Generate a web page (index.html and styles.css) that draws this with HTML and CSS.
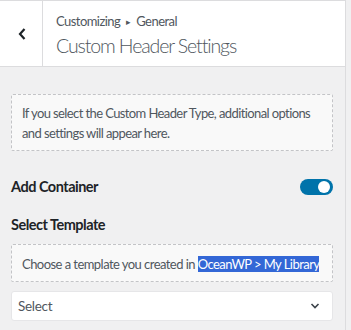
FILE: index.html
```html
<!DOCTYPE html>
<html lang="en">
<head>
    <meta charset="UTF-8">
    <meta name="viewport" content="width=device-width, initial-scale=1.0">
    <title>Custom Header Settings</title>
    <link rel="stylesheet" href="styles.css">
</head>
<body>
    <div class="panel">
        <header class="section-header">
            <button class="back-btn" aria-label="Back">
                <svg width="10" height="14" viewBox="0 0 10 14">
                    <path d="M7.5 2 L3 7 L7.5 12" fill="none" stroke="#1d2327" stroke-width="2.2"/>
                </svg>
            </button>
            <div class="titles">
                <span class="crumb">Customizing <span class="crumb-sep">&#9656;</span> General</span>
                <h2>Custom Header Settings</h2>
            </div>
        </header>

        <div class="controls">
            <div class="notice">
                If you select the Custom Header Type, additional options and settings will appear here.
            </div>

            <div class="control-row">
                <span class="control-title">Add Container</span>
                <span class="toggle"><span class="knob"></span></span>
            </div>

            <div class="control-title select-title">Select Template</div>

            <div class="notice notice-small">
                Choose a template you created in <span class="selected">OceanWP &gt; My Library</span>
            </div>

            <div class="select-box">
                <span>Select</span>
                <svg width="10" height="6" viewBox="0 0 10 6">
                    <path d="M1.5 1 L5 4.5 L8.5 1" fill="none" stroke="#3c434a" stroke-width="1.6"/>
                </svg>
            </div>
        </div>
    </div>
</body>
</html>
```

FILE: styles.css
```css
* {
    margin: 0;
    padding: 0;
    box-sizing: border-box;
}

body {
    background: #f0f0f1;
    font-family: Lato, sans-serif;
    color: #50575e;
    font-size: 13px;
    letter-spacing: -0.3px;
}

.panel {
    width: 346px;
    min-height: 100vh;
    border-right: 1px solid #dcdcde;
}

/* Header with back button */
.section-header {
    display: flex;
    background: #fff;
    border-top: 1px solid #dcdcde;
    border-bottom: 1px solid #dcdcde;
    height: 67px;
}

.back-btn {
    width: 43px;
    border: none;
    border-right: 1px solid #dcdcde;
    background: #fff;
    display: flex;
    align-items: center;
    justify-content: center;
    padding-left: 1px;
}

.titles {
    padding: 11px 0 0 13px;
    display: flex;
    flex-direction: column;
}

.crumb {
    font-size: 13px;
    line-height: 18px;
    color: #50575e;
    letter-spacing: -0.55px;
}

.crumb-sep {
    font-size: 9px;
    margin: 0 3px;
    vertical-align: 1px;
}

.titles h2 {
    font-size: 19.5px;
    font-weight: 300;
    line-height: 26px;
    color: #50575e;
    letter-spacing: -1.1px;
    margin-top: 2px;
}

.controls {
    padding: 27px 12px 0 11px;
}

.notice {
    background: #f9f9f9;
    border: 1px dashed #c3c4c7;
    border-radius: 2px;
    padding: 8px 0 7px 10px;
    line-height: 20px;
    letter-spacing: -0.6px;
}

.control-row {
    display: flex;
    align-items: center;
    justify-content: space-between;
    margin-top: 26px;
}

.control-title {
    font-size: 14.5px;
    font-weight: 700;
    color: #1d2327;
    line-height: 20px;
    letter-spacing: -0.5px;
}

.toggle {
    width: 33px;
    height: 16px;
    border-radius: 8px;
    background: #0073aa;
    position: relative;
}

.knob {
    position: absolute;
    top: 2px;
    right: 3px;
    width: 12px;
    height: 12px;
    border-radius: 50%;
    background: #fff;
}

.select-title {
    margin-top: 18px;
}

.notice-small {
    margin-top: 9px;
    padding: 9px 0 7px 10px;
    white-space: nowrap;
    letter-spacing: -0.55px;
}

.selected {
    background: #3367d6;
    color: #fff;
}

.select-box {
    margin-top: 9px;
    height: 30px;
    background: #fff;
    border-radius: 3px;
    border: 1px solid #e6e6e8;
    display: flex;
    align-items: center;
    justify-content: space-between;
    padding: 0 12px 0 6px;
    color: #50575e;
    font-size: 13.5px;
}
```
